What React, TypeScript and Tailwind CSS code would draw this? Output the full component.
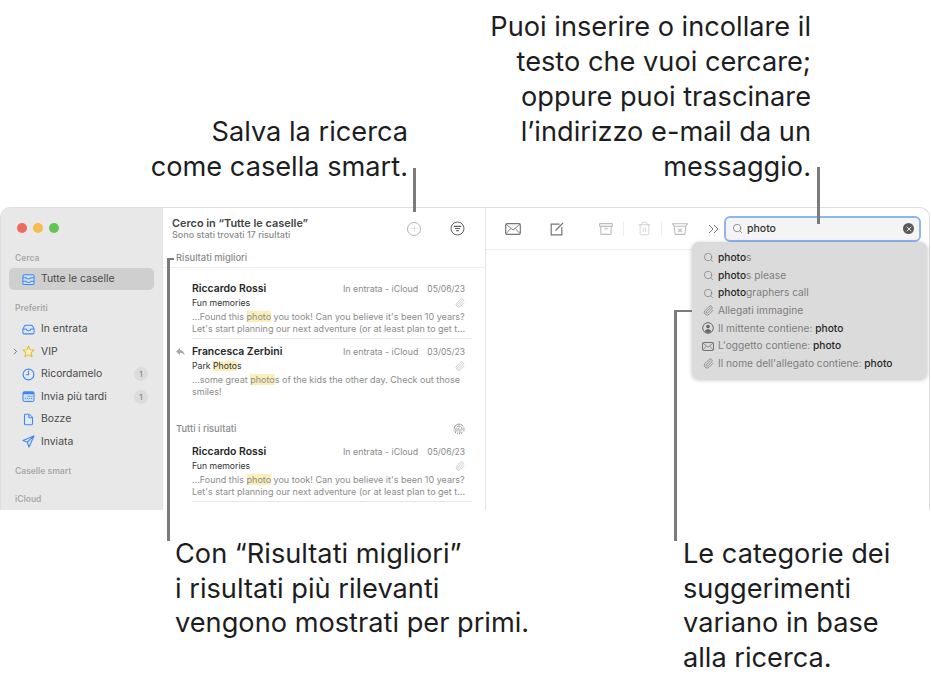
import React from 'react';
import { ChevronRight, Fingerprint, Paperclip, Plus, Search, Trash2, X } from 'lucide-react';

const BLUE = '#3f86ee';

const TrayIcon = ({ stacked }: { stacked?: boolean }) => (
  <svg width="14" height="13" viewBox="0 0 14 13" fill="none" stroke={BLUE} strokeWidth="1.100">
    {stacked ? (
      <>
        <path d="M1 3c0-1 .6-1.700 1.600-1.700h8.800c1 0 1.600.7 1.600 1.700v7.500c0 .9-.6 1.500-1.500 1.500h-9c-.9 0-1.500-.6-1.500-1.500z" fill="#cfe0f8" />
        <path d="M1 4.500h3.400c.2 1 1.200 1.500 2.600 1.500s2.400-.5 2.600-1.500H13M1 8.300h3.400c.2 1 1.200 1.500 2.600 1.500s2.400-.5 2.600-1.500H13" />
      </>
    ) : (
      <>
        <path d="M1 6 2.700 2.800C3 2.200 3.500 1.800 4.200 1.800h5.600c.7 0 1.200.4 1.500 1L13 6v3.700c0 .9-.6 1.500-1.500 1.500h-9c-.9 0-1.500-.6-1.500-1.500z" fill="#dce8f8" />
        <path d="M1 6h3.400c.2 1.100 1.200 1.800 2.600 1.800s2.400-.7 2.600-1.800H13" />
      </>
    )}
  </svg>
);

const StarIcon = () => (
  <svg width="13" height="13" viewBox="0 0 13 13" fill="#fbf3d0" stroke="#e9bb3c" strokeWidth="1.100" strokeLinejoin="round">
    <path d="M6.500 1 8.100 4.700 12 5.100 9.100 7.700 10 11.700 6.500 9.600 3 11.700 3.900 7.700 1 5.100 4.900 4.700z" />
  </svg>
);

const ClockIcon = () => (
  <svg width="13" height="13" viewBox="0 0 13 13" fill="none" stroke={BLUE} strokeWidth="1.100">
    <circle cx="6.500" cy="6.500" r="5.400" />
    <path d="M6.500 2.800v3.900H3.800" />
  </svg>
);

const CalendarIcon = () => (
  <svg width="13" height="13" viewBox="0 0 13 13">
    <rect x="1" y="1.800" width="11" height="9.700" rx="1.300" fill="#cfe0f8" stroke={BLUE} />
    <rect x="1" y="1.800" width="11" height="2.400" fill={BLUE} />
    <path d="M5.500 6.300h5M3 8.300h7.500" stroke={BLUE} strokeDasharray="1 1" />
  </svg>
);

const DocIcon = () => (
  <svg width="13" height="13" viewBox="0 0 13 13" fill="#e2ecf9" stroke={BLUE} strokeWidth="1.100">
    <path d="M2.500 2.300c0-.7.4-1.100 1.100-1.100h3.600l3.300 3.300v6.200c0 .7-.4 1.100-1.100 1.100H3.600c-.7 0-1.100-.4-1.100-1.100z" />
    <path d="M7 1.300v3.400h3.400" />
  </svg>
);

const SendIcon = () => (
  <svg width="13" height="13" viewBox="0 0 13 13" fill="none" stroke={BLUE} strokeWidth="1.100" strokeLinejoin="round">
    <path d="M12 1 1 5.500l4.300 1.700 1.700 4.800z" />
    <path d="M12 1 5.300 7.200" />
  </svg>
);

const MailIcon = ({ w = 16, h = 12, color = '#757575' }: { w?: number; h?: number; color?: string }) => (
  <svg width={w} height={h} viewBox="0 0 16 12" fill="none" stroke={color} strokeWidth="1.200">
    <rect x="0.700" y="0.700" width="14.600" height="10.600" rx="1.300" />
    <path d="M1 1.200 8 7l7-5.800M1 10.800 5.800 5.300M15 10.800 10.200 5.300" strokeWidth="0.900" />
  </svg>
);

const ComposeIcon = () => (
  <svg width="14" height="14" viewBox="0 0 14 14" fill="none" stroke="#757575" strokeWidth="1.200">
    <path d="M9.500 2.200H1.200v10.600h10.600V5" />
    <path d="M5.500 8.500 13 1" />
  </svg>
);

const ArchiveIcon = () => (
  <svg width="14" height="12" viewBox="0 0 14 12" fill="none" stroke="#bdbdbd" strokeWidth="1.100">
    <rect x="0.600" y="0.600" width="12.800" height="2.800" rx="0.500" />
    <path d="M1.800 3.400v7a1 1 0 0 0 1 1h8.400a1 1 0 0 0 1-1v-7M5 5.800h4" />
  </svg>
);

const JunkIcon = () => (
  <svg width="16" height="12" viewBox="0 0 16 12" fill="none" stroke="#bdbdbd" strokeWidth="1.100">
    <path d="M.6.800h14.800L13.800 3.200H2.200zM2.200 3.200l.8 7.500a.8.800 0 0 0 .8.700h8.400a.8.800 0 0 0 .8-.7l.8-7.500" />
    <path d="M6.300 5.600 9.700 9M9.700 5.600 6.300 9" />
  </svg>
);

const OverflowIcon = () => (
  <svg width="11" height="10" viewBox="0 0 11 10" fill="none" stroke="#757575" strokeWidth="1">
    <path d="M1 1l4 4-4 4M6 1l4 4-4 4" />
  </svg>
);

const ClearIcon = () => (
  <span className="flex h-[11px] w-[11px] items-center justify-center rounded-full bg-[#5a5a5a]">
    <X size={8} color="#e8e8e8" strokeWidth={3} />
  </span>
);

const FilterIcon = () => (
  <svg width="15" height="15" viewBox="0 0 15 15" fill="none" stroke="#5f5f5f">
    <circle cx="7.500" cy="7.500" r="6.500" />
    <path d="M3.800 5.300h7.400M5 7.500h5M6.200 9.700h2.600" strokeWidth="1.200" />
  </svg>
);

const ReplyIcon = () => (
  <svg width="9" height="8" viewBox="0 0 9 8" fill="#a8a8a8">
    <path d="M4 0 0 3.400 4 7V4.900c2 0 3.400.5 4.600 2.300C8.300 4.400 6.800 2.300 4 2z" />
  </svg>
);

const PersonIcon = () => (
  <svg width="12" height="12" viewBox="0 0 12 12" fill="none" stroke="#666">
    <circle cx="6" cy="6" r="5.300" />
    <circle cx="6" cy="4.600" r="1.800" fill="#666" stroke="none" />
    <path d="M2.800 9.300c.7-1.500 1.800-2 3.200-2s2.500.5 3.200 2C8.400 10.200 7.300 10.800 6 10.800s-2.400-.6-3.200-1.500z" fill="#666" stroke="none" />
  </svg>
);

const Hl = ({ children }: { children: React.ReactNode }) => <span className="bg-[#fbeeb8]">{children}</span>;

const SidebarRow = ({ icon, label, badge, selected, chevron }: { icon: React.ReactNode; label: string; badge?: string; selected?: boolean; chevron?: boolean }) => (
  <div className={`relative mx-[8px] flex h-[22.500px] items-center gap-[6px] rounded-[5px] pl-[13px] pr-[6px] text-[10.400px] text-[#4a4a4a] ${selected ? 'bg-[#cfcfcf]' : ''}`}>
    {chevron && <ChevronRight size={9} strokeWidth={2} className="absolute left-[2px] text-[#555]" />}
    <span className="flex w-[13px] justify-center">{icon}</span>
    <span className="flex-1">{label}</span>
    {badge && <span className="flex h-[14px] w-[14px] items-center justify-center rounded-full bg-[#dcdcdc] text-[8px] text-[#777]">{badge}</span>}
  </div>
);

const SectionLabel = ({ children, className }: { children: React.ReactNode; className?: string }) => (
  <div className={`pl-[14px] text-[8.500px] font-semibold text-[#a9a9a9] ${className ?? ''}`}>{children}</div>
);

const MessageRow = ({ name, date, subject, body, reply, divider }: { name: string; date: string; subject: React.ReactNode; body: React.ReactNode; reply?: boolean; divider?: boolean }) => (
  <div className="relative ml-[29px] mr-[13px]">
    {reply && <span className="absolute left-[-16px] top-[3px]"><ReplyIcon /></span>}
    <div className="flex items-baseline pr-[7px]">
      <span className="flex-1 text-[10.400px] font-semibold leading-[14px] text-[#262626]">{name}</span>
      <span className="text-[8.850px] text-[#8a8a8a]">In entrata - iCloud</span>
      <span className="ml-[9px] text-[8.500px] text-[#8a8a8a]">{date}</span>
    </div>
    <div className="mt-[1px] flex items-center justify-between pr-[7px] text-[8.700px] leading-[12px] text-[#333]">
      <span>{subject}</span>
      <Paperclip size={10} className="text-[#c4c4c4]" />
    </div>
    <div className="mt-[2px] h-[25px] whitespace-nowrap text-[9px] leading-[11.700px] text-[#8c8c8c]">{body}</div>
    {divider && <div className="mt-[2px] h-[1px] bg-[#e6e6e6]" />}
  </div>
);

const Suggestion = ({ icon, children }: { icon: React.ReactNode; children: React.ReactNode }) => (
  <div className="flex h-[17.670px] items-center gap-[4px] pl-[10px] text-[10.200px] text-[#7d7d7d]">
    <span className="flex w-[12px] justify-center">{icon}</span>
    <span>{children}</span>
  </div>
);

const B = ({ children }: { children: React.ReactNode }) => <span className="font-medium text-[#262626]">{children}</span>;

const searchIcon = <Search size={11} strokeWidth={1.300} className="text-[#6a6a6a]" />;

export default function App() {
  return (
    <div className="relative h-[678px] w-[931px] overflow-hidden bg-white font-['Inter',sans-serif]">
      {/* callouts over the window */}
      <div className="flex h-[207px] items-end whitespace-nowrap text-[27.200px] leading-[35px] text-[#1d1d1f]">
        <div className="w-[408px] pb-[23px] text-right">Salva la ricerca<br />come casella smart.</div>
        <div className="w-[403px] pb-[23px] text-right">Puoi inserire o incollare il<br />testo che vuoi cercare;<br />oppure puoi trascinare<br />l’indirizzo e-mail da un<br />messaggio.</div>
      </div>

      <div className="flex h-[303px] w-[930px] overflow-hidden rounded-t-[10px] border-x border-t border-[#dedede]">
        <aside className="w-[161px] shrink-0 bg-[#e8e8e8]">
          <div className="flex gap-[6px] pl-[16px] pt-[15px]">
            <span className="h-[10px] w-[10px] rounded-full bg-[#ee6a5f]" />
            <span className="h-[10px] w-[10px] rounded-full bg-[#f5bd4f]" />
            <span className="h-[10px] w-[10px] rounded-full bg-[#61c555]" />
          </div>
          <SectionLabel className="mt-[19px]">Cerca</SectionLabel>
          <div className="mt-[3px]"><SidebarRow selected icon={<TrayIcon stacked />} label="Tutte le caselle" /></div>
          <SectionLabel className="mt-[12px]">Preferiti</SectionLabel>
          <div className="mt-[3px]">
            <SidebarRow icon={<TrayIcon />} label="In entrata" />
            <SidebarRow chevron icon={<StarIcon />} label="VIP" />
            <SidebarRow icon={<ClockIcon />} label="Ricordamelo" badge="1" />
            <SidebarRow icon={<CalendarIcon />} label="Invia più tardi" badge="1" />
            <SidebarRow icon={<DocIcon />} label="Bozze" />
            <SidebarRow icon={<SendIcon />} label="Inviata" />
          </div>
          <SectionLabel className="mt-[12px]">Caselle smart</SectionLabel>
          <SectionLabel className="mt-[15px]">iCloud</SectionLabel>
        </aside>

        <section className="w-[324px] shrink-0 border-x border-[#e3e3e3]">
          <div className="flex h-[43px] items-start justify-between pl-[9px] pr-[20px] pt-[9px]">
            <div>
              <div className="text-[10.900px] font-semibold leading-[12px] text-[#444]">Cerco in “Tutte le caselle”</div>
              <div className="text-[9px] font-medium leading-[12px] text-[#8a8a8a]">Sono stati trovati 17 risultati</div>
            </div>
            <div className="mt-[4px] flex items-center gap-[29px]">
              <span className="flex h-[14px] w-[14px] items-center justify-center rounded-full border border-[#b5b5b5]"><Plus size={9} strokeWidth={1} className="text-[#b5b5b5]" /></span>
              <FilterIcon />
            </div>
          </div>
          <div className="border-b border-[#eeeeee] pb-[3px] pl-[13px] text-[9.400px] font-medium leading-[13px] text-[#8a8a8a]">Risultati migliori</div>
          <div className="pt-[14px]">
            <MessageRow name="Riccardo Rossi" date="05/06/23" subject="Fun memories" divider body={<>...Found this <Hl>photo</Hl> you took! Can you believe it's been 10 years?<br />Let's start planning our next adventure (or at least plan to get t...</>} />
          </div>
          <div className="pt-[6px]">
            <MessageRow reply name="Francesca Zerbini" date="03/05/23" subject={<>Park <Hl>Photo</Hl>s</>} body={<>...some great <Hl>photo</Hl>s of the kids the other day. Check out those<br />smiles!</>} />
          </div>
          <div className="mt-[23px] flex items-center justify-between pl-[13px] pr-[20px] text-[9.400px] font-medium text-[#8a8a8a]">
            <span>Tutti i risultati</span>
            <Fingerprint size={12} className="text-[#9a9a9a]" />
          </div>
          <div className="pt-[9px]">
            <MessageRow name="Riccardo Rossi" date="05/06/23" subject="Fun memories" divider body={<>...Found this <Hl>photo</Hl> you took! Can you believe it's been 10 years?<br />Let's start planning our next adventure (or at least plan to get t...</>} />
          </div>
        </section>

        <main className="flex-1">
          <div className="flex h-[42px] items-center border-b border-[#eeeeee] pl-[19px]">
            <MailIcon />
            <span className="ml-[29px]"><ComposeIcon /></span>
            <span className="ml-[35px]"><ArchiveIcon /></span>
            <span className="ml-[10px] h-[14px] w-px bg-[#eeeeee]" />
            <Trash2 size={15} strokeWidth={1} className="ml-[13px] text-[#bdbdbd]" />
            <span className="ml-[9px] h-[14px] w-px bg-[#eeeeee]" />
            <span className="ml-[10px]"><JunkIcon /></span>
            <span className="ml-[20px]"><OverflowIcon /></span>
            <div className="ml-[5px] flex h-[26px] w-[197px] items-center rounded-[6px] border-[2.500px] border-[#8fb4f0] bg-[#f4f4f4] pl-[6px] pr-[5px]">
              <Search size={11} strokeWidth={1.500} className="text-[#666]" />
              <span className="ml-[4px] flex-1 text-[10.500px] font-medium text-[#333]">photo</span>
              <ClearIcon />
            </div>
          </div>
        </main>
      </div>

      <div className="flex whitespace-nowrap pt-[27px] text-[27.200px] leading-[34.700px] text-[#1d1d1f]">
        <div className="w-[508px] pl-[175px]">Con “Risultati migliori”<br />i risultati più rilevanti<br />vengono mostrati per primi.</div>
        <div className="pl-[175px]">Le categorie dei<br />suggerimenti<br />variano in base<br />alla ricerca.</div>
      </div>

      {/* suggestions popover */}
      <div className="absolute left-[692px] top-[242px] w-[235px] rounded-[7px] bg-[#dbdbdb] py-[6px] pt-[7px] shadow-[0_1px_4px_rgba(0,0,0,0.25)]">
        <Suggestion icon={searchIcon}><B>photo</B>s</Suggestion>
        <Suggestion icon={searchIcon}><B>photo</B>s please</Suggestion>
        <Suggestion icon={searchIcon}><B>photo</B>graphers call</Suggestion>
        <Suggestion icon={<Paperclip size={11} className="text-[#8a8a8a]" />}>Allegati immagine</Suggestion>
        <Suggestion icon={<PersonIcon />}>Il mittente contiene: <B>photo</B></Suggestion>
        <Suggestion icon={<MailIcon w={12} h={9} color="#666" />}>L'oggetto contiene: <B>photo</B></Suggestion>
        <Suggestion icon={<Paperclip size={11} className="text-[#8a8a8a]" />}>Il nome dell'allegato contiene: <B>photo</B></Suggestion>
      </div>

      {/* leader lines */}
      <span className="absolute left-[413px] top-[168px] h-[44px] w-[2.500px] bg-[#7b7b7b]" />
      <span className="absolute left-[817px] top-[167px] h-[57px] w-[2.500px] bg-[#7b7b7b]" />
      <span className="absolute left-[167px] top-[258px] h-[283px] w-[2.500px] bg-[#7b7b7b]" />
      <span className="absolute left-[167px] top-[258px] h-[2px] w-[7px] bg-[#7b7b7b]" />
      <span className="absolute left-[674px] top-[310px] h-[231px] w-[2.500px] bg-[#7b7b7b]" />
      <span className="absolute left-[674px] top-[310px] h-[2px] w-[18px] bg-[#7b7b7b]" />
    </div>
  );
}
